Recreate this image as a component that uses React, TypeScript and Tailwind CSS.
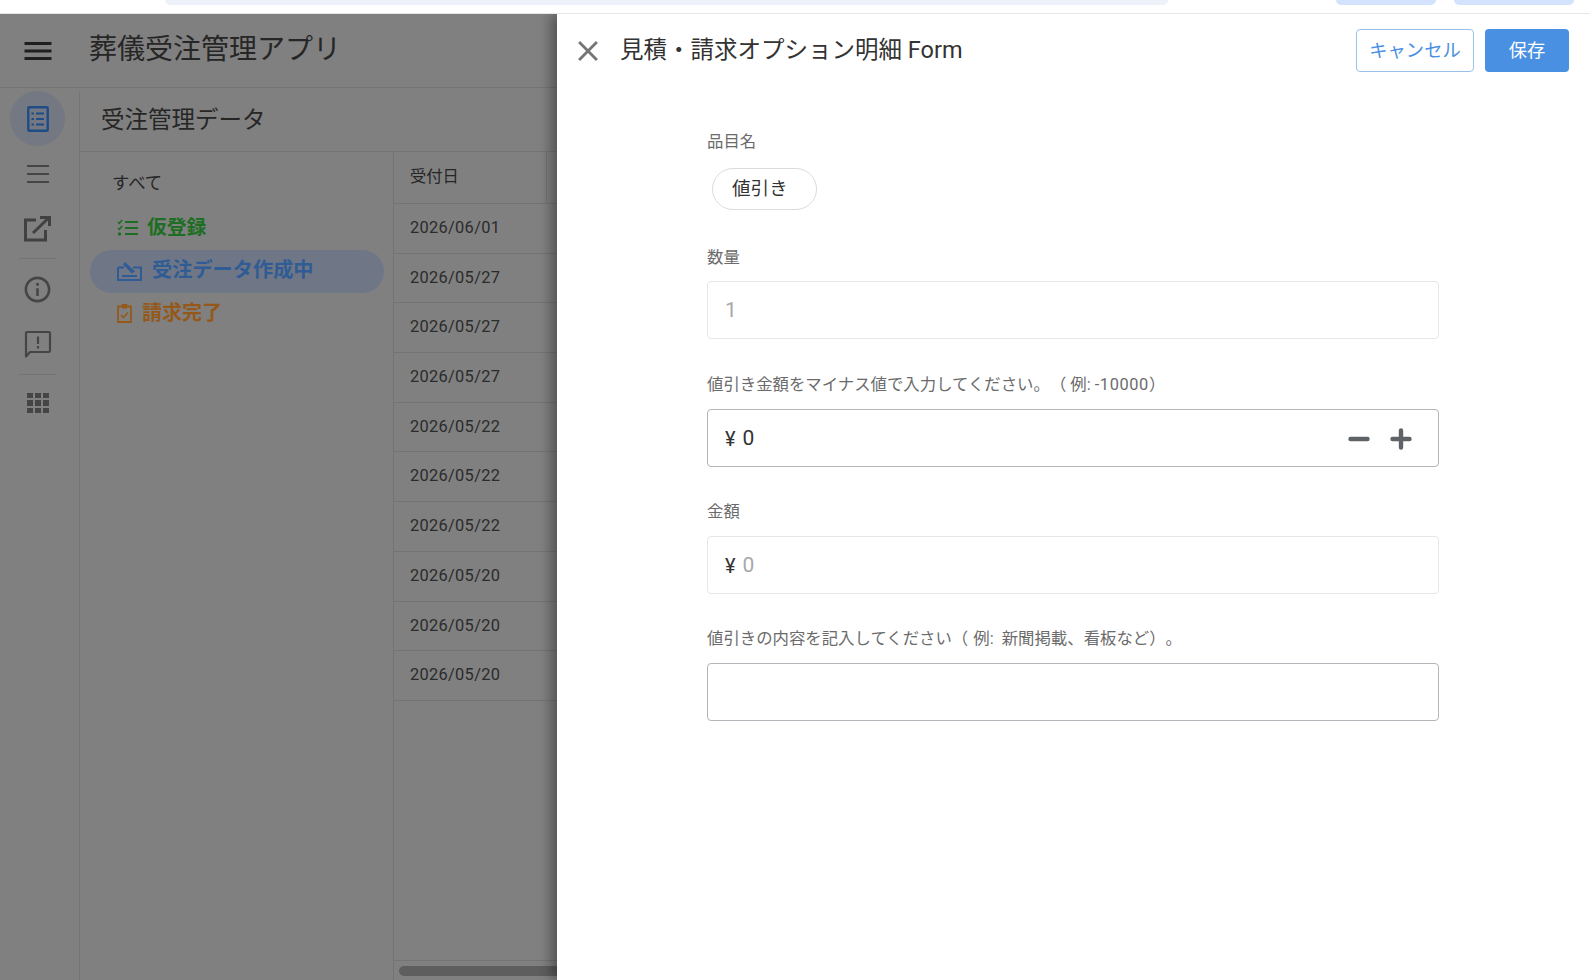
import { MdClose, MdMenu, MdOutlineInfo } from 'react-icons/md';

const font = "font-['Roboto','Noto_Sans_CJK_JP',sans-serif]";

const dates = [
  '2026/06/01',
  '2026/05/27',
  '2026/05/27',
  '2026/05/27',
  '2026/05/22',
  '2026/05/22',
  '2026/05/22',
  '2026/05/20',
  '2026/05/20',
  '2026/05/20',
];

function SideItem({ children, h = 'h-[55px]' }: { children: React.ReactNode; h?: string }) {
  return <div className={`${h} w-full flex items-center justify-center shrink-0`}>{children}</div>;
}

function Label({ children, className = '' }: { children: React.ReactNode; className?: string }) {
  return (
    <div className={`h-6 leading-[25px] text-[16.4px] text-[#6b6b6b] [text-spacing-trim:space-all] ${className}`}>
      {children}
    </div>
  );
}

export default function App() {
  return (
    <div className={`relative w-[1590px] h-[980px] overflow-hidden bg-white flex flex-col ${font}`}>
      {/* browser strip */}
      <div className="h-[14px] shrink-0 flex items-start border-b border-[#e6e6e6] bg-white">
        <div className="ml-[165px] w-[1003px] h-[5px] bg-[#edf2fa] rounded-b-[14px]" />
        <div className="ml-[168px] w-[100px] h-[5px] bg-[#d3e3fd] rounded-b-[14px]" />
        <div className="ml-[18px] w-[120px] h-[5px] bg-[#d3e3fd] rounded-b-[14px]" />
      </div>

      {/* dimmed app */}
      <div className="flex-1 flex flex-col bg-[#808080] min-h-0">
        <div className="h-[74px] shrink-0 flex items-center border-b border-[#747474]">
          <MdMenu className="ml-[20px] text-[#1f1f1f]" size={36} />
          <div className="ml-[33px] text-[28px] text-[#262626] -mt-[2px]">葬儀受注管理アプリ</div>
        </div>
        <div className="flex-1 flex min-h-0">
          <div className="w-[80px] shrink-0 border-r border-[#747474] flex flex-col items-center mt-[3px] pr-[4px]">
            <SideItem>
              <div className="w-[55px] h-[55px] rounded-full bg-[#737882] flex items-center justify-center">
                <svg width="22" height="26" viewBox="0 0 22 26" fill="none" stroke="#1f4c86">
                  <rect x="1.3" y="1.3" width="19.4" height="23.4" rx="1" strokeWidth="2.4" />
                  <path d="M9 7.5h8M9 13h8M9 18.5h8" strokeWidth="2.2" />
                  <path d="M4.5 7.5h2.4M4.5 13h2.4M4.5 18.5h2.4" strokeWidth="2.2" />
                </svg>
              </div>
            </SideItem>
            <SideItem>
              <svg width="24" height="20" viewBox="0 0 24 20" fill="none" stroke="#454545" strokeWidth="2.2">
                <path d="M1 2h22M1 10h22M1 18h22" />
              </svg>
            </SideItem>
            <SideItem>
              <svg width="29" height="27" viewBox="0 0 29 27" fill="none" stroke="#414141" strokeWidth="3">
                <path d="M13 5H2.5v20h20V15" />
                <path d="M10 18 25 3.5" />
                <path d="M17 2.5h9.5V11" />
              </svg>
            </SideItem>
            <div className="w-[37px] h-px bg-[#747474] mt-[2px] mb-[3px] shrink-0" />
            <SideItem h="h-[54px]">
              <MdOutlineInfo className="text-[#454545]" size={31} />
            </SideItem>
            <SideItem h="h-[55px]">
              <svg width="28" height="28" viewBox="0 0 28 28" fill="none">
                <path d="M2 3.2c0-.7.5-1.2 1.2-1.2h21.6c.7 0 1.2.5 1.2 1.2v17.6c0 .7-.5 1.2-1.2 1.2H6l-4 4.5z" stroke="#454545" strokeWidth="2.2" strokeLinejoin="round" />
                <path d="M14 6.5v7.5M14 16v2.6" stroke="#454545" strokeWidth="2.2" />
              </svg>
            </SideItem>
            <div className="w-[37px] h-px bg-[#747474] mt-[3px] mb-px shrink-0" />
            <SideItem h="h-[54px]">
              <div className="grid grid-cols-3 gap-[2px]">
                {Array.from({ length: 9 }).map((_, i) => (
                  <div key={i} className="w-[6px] h-[5.5px] bg-[#454545]" />
                ))}
              </div>
            </SideItem>
          </div>

          <div className="flex-1 flex flex-col min-w-0">
            <div className="h-[64px] shrink-0 flex items-center pl-[21px] pt-[2px] border-b border-[#747474] text-[23.5px] text-[#262626]">
              受注管理データ
            </div>
            <div className="flex-1 flex min-h-0">
              <div className="w-[314px] shrink-0 border-r border-[#747474] flex flex-col">
                <div className="h-[62px] shrink-0 pl-[32px] pt-[19px] text-[17.4px] leading-6 text-[#262626]">すべて</div>
                <div className="h-[36px] -mt-[4px] shrink-0 pl-[37px] flex items-center text-[19.8px] font-bold text-[#1d6e22]">
                  <svg className="shrink-0" width="21" height="18" viewBox="0 0 21 18" fill="none" stroke="#1d6e22">
                    <path d="M8 3h13M8 9h13M8 15h13" strokeWidth="2.2" />
                    <path d="M1 3l1.3 1.3L5.2 1" strokeWidth="1.6" />
                    <path d="M1 9l1.3 1.3L5.2 7" strokeWidth="1.6" />
                    <circle cx="2.5" cy="15" r="1.7" fill="#1d6e22" stroke="none" />
                  </svg>
                  <span className="ml-[9px]">仮登録</span>
                </div>
                <div className="mt-[4px] ml-[10px] w-[294px] h-[43px] shrink-0 rounded-full bg-[#6f7686] pl-[27px] pb-[2px] flex items-center text-[20.2px] font-bold text-[#2f5c94]">
                  <svg className="shrink-0" width="25" height="20" viewBox="0 0 25 20" fill="none" stroke="#2f5c94" strokeWidth="2">
                    <path d="M1 6.5h6M16 6.5h8V19H1V6.5" />
                    <path d="M5 15h15" />
                    <path d="M8 1l10 9.5-3 2-9-9z" fill="#2f5c94" stroke="none" />
                  </svg>
                  <span className="ml-[10px]">受注データ作成中</span>
                </div>
                <div className="mt-[2px] h-[36px] shrink-0 pl-[37px] flex items-center text-[20px] font-bold text-[#94591a]">
                  <svg className="shrink-0" width="15" height="20" viewBox="0 0 15 20" fill="none" stroke="#94591a">
                    <path d="M4.5 3.5H1v15.5h13V3.5h-3.5" strokeWidth="1.8" />
                    <rect x="4.5" y="1" width="6" height="4.5" rx="1" fill="#94591a" stroke="none" />
                    <path d="M4 12l2.5 2.5L11 9.5" strokeWidth="1.6" />
                  </svg>
                  <span className="ml-[10px]">請求完了</span>
                </div>
              </div>

              <div className="flex-1 min-w-0 flex flex-col">
                <div className="h-[52px] shrink-0 flex border-b border-[#747474]">
                  <div className="w-[153px] border-r border-[#747474] pl-[16px] flex items-center text-[16.3px] text-[#262626]">
                    受付日
                  </div>
                </div>
                {dates.map((d, i) => (
                  <div
                    key={i}
                    className="h-[49.7px] shrink-0 pl-[16px] flex items-center border-b border-[#747474] text-[16.4px] tracking-[0.3px] text-[#2b2b2b]"
                  >
                    {d}
                  </div>
                ))}
                <div className="flex-1" />
                <div className="h-[20px] shrink-0 border-t border-[#747474] pl-[5px] pt-[5px]">
                  <div className="h-[10px] rounded-l-full bg-[#5e5e5e]" />
                </div>
              </div>
            </div>
          </div>
        </div>
      </div>

      {/* drawer */}
      <div className="absolute left-[557px] right-0 top-[14px] bottom-0 bg-white shadow-[-6px_0_12px_rgba(0,0,0,0.35)] [clip-path:inset(0_0_0_-20px)] flex flex-col">
        <div className="h-[43px] mt-[15px] shrink-0 flex items-center justify-between pl-[14px] pr-[21px]">
          <div className="flex items-center">
            <MdClose className="text-[#757575]" size={34} />
            <div className="ml-[15px] text-[23.5px] text-[#333]">見積・請求オプション明細 Form</div>
          </div>
          <div className="flex gap-[11px]">
            <div className="w-[118px] h-[43px] rounded-[4px] border border-[#9cc2ec] flex items-center justify-center text-[18.3px] text-[#4a90e2]">
              キャンセル
            </div>
            <div className="w-[84px] h-[43px] rounded-[4px] bg-[#4a90e2] flex items-center justify-center text-[18.3px] text-white">
              保存
            </div>
          </div>
        </div>

        <div className="pt-[57px] pl-[150px] pr-[151px] flex flex-col">
          <Label>品目名</Label>
          <div className="mt-[15px] ml-[5px] w-[105px] h-[42px] rounded-full border border-[#dcdcdc] pl-[19px] pt-px flex items-center text-[18.6px] text-[#333]">
            値引き
          </div>

          <Label className="mt-[35px]">数量</Label>
          <div className="mt-3 h-[58px] rounded-[4px] border border-[#e6e6e6] pl-[17px] pt-px flex items-center text-[21px] text-[#a8a8a8]">
            1
          </div>

          <Label className="mt-[33px]">
            値引き金額をマイナス値で入力してください。（<span className="ml-[4px]">例: </span>
            <span className="tracking-[0.6px]">-10000</span>）
          </Label>
          <div className="mt-[13px] h-[58px] rounded-[4px] border border-[#b4b4ba] pl-[17px] pr-[26px] pt-px flex items-center justify-between text-[#333]">
            <div className="flex items-center gap-[7px]">
              <span className="text-[20px]">¥</span>
              <span className="text-[21px]">0</span>
            </div>
            <div className="flex items-center gap-[20px]">
              <svg width="22" height="22" viewBox="0 0 22 22" stroke="#5f6368" strokeWidth="4.4" strokeLinecap="round">
                <path d="M2.5 11h17" />
              </svg>
              <svg width="22" height="22" viewBox="0 0 22 22" stroke="#5f6368" strokeWidth="4.4" strokeLinecap="round">
                <path d="M2.5 11h17M11 2.5v17" />
              </svg>
            </div>
          </div>

          <Label className="mt-[32px]">金額</Label>
          <div className="mt-[13px] h-[58px] rounded-[4px] border border-[#e6e6e6] pl-[17px] pt-px flex items-center gap-[7px] text-[#333]">
            <span className="text-[20px]">¥</span>
            <span className="text-[21px] text-[#a8a8a8]">0</span>
          </div>

          <Label className="mt-[32px]">
            値引きの内容を記入してください（<span className="ml-[5px] mr-[4px]">例: </span>新聞掲載、看板など）。
          </Label>
          <div className="mt-[13px] h-[58px] rounded-[4px] border border-[#b4b4ba]" />
        </div>
      </div>
    </div>
  );
}
